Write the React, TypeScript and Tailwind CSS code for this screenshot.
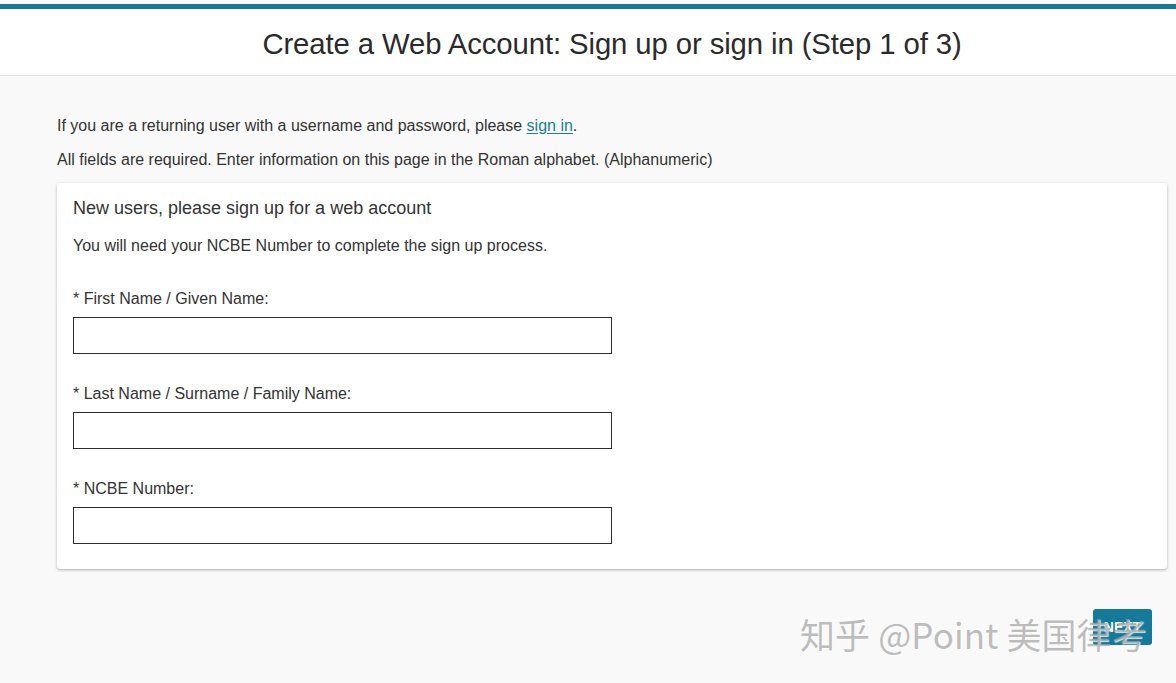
import React from "react";

function Field({ label }: { label: string }) {
  return (
    <div className="mb-[30px]">
      <div className="text-[16px] leading-[20px] text-[#333] mb-[8px]">{label}</div>
      <div className="w-[539px] h-[37px] border border-[#2e2e2e] bg-white" />
    </div>
  );
}

export default function App() {
  return (
    <div className="relative w-[1176px] h-[683px] overflow-hidden bg-[#f9f9f9] text-[#333]" style={{ fontFamily: '"Liberation Sans", Arial, sans-serif' }}>
      <div className="bg-white pt-[4px]">
        <div className="h-[5px] bg-[#15799a]" />
        <div className="h-[67px] border-b border-[#e4e4e4] flex items-center justify-center pl-[48px] pt-[3px]">
          <h1 className="text-[29.3px] text-[#2b2b2b] tracking-[-0.1px]">Create a Web Account: Sign up or sign in (Step 1 of 3)</h1>
        </div>
      </div>
      <div className="pl-[57px] pr-[9px] pt-[40px]">
        <p className="text-[16px] leading-[20px]">
          If you are a returning user with a username and password, please{" "}
          <span className="text-[#1a7f97] underline underline-offset-2">sign in</span>.
        </p>
        <p className="text-[16px] leading-[20px] mt-[14px]">
          All fields are required. Enter information on this page in the Roman alphabet. (Alphanumeric)
        </p>
        <div className="mt-[13px] bg-white rounded-[3px] shadow-[0_1px_3px_rgba(0,0,0,0.3)] px-[16px] pt-[14px] pb-[4px] h-[386px]">
          <div className="text-[18px] leading-[22px] text-[#333]">New users, please sign up for a web account</div>
          <div className="text-[16px] leading-[20px] mt-[17px]">You will need your NCBE Number to complete the sign up process.</div>
          <div className="mt-[33px]">
            <Field label="* First Name / Given Name:" />
            <Field label="* Last Name / Surname / Family Name:" />
            <Field label="* NCBE Number:" />
          </div>
        </div>
        <div className="flex justify-end pr-[15px] mt-[40px]">
          <button className="w-[59px] h-[36px] bg-[#15799a] rounded-[3px] text-white text-[14px] font-bold">NEXT</button>
        </div>
      </div>
      <div
        className="absolute left-[800px] top-[612px] text-[35px] leading-[44px] tracking-[0.1px] text-[rgba(160,160,160,0.7)] whitespace-nowrap pointer-events-none"
        style={{ fontFamily: '"Noto Sans CJK SC", "Noto Sans", sans-serif', textShadow: "1px 1px 1px rgba(255,255,255,0.8)" }}
      >
        知乎 @Point 美国律考
      </div>
    </div>
  );
}
